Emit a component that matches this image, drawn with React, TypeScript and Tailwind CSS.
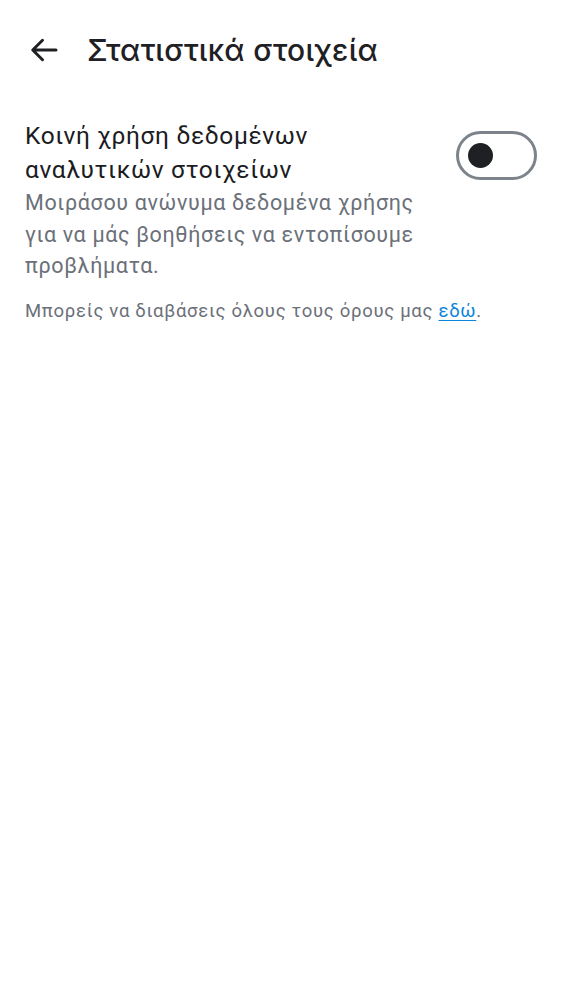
import React, { useState } from "react";

function BackArrow() {
  return (
    <svg width="36" height="36" viewBox="0 0 24 24" fill="none" className="text-[#1f2024]">
      <path
        d="M20 12H4.8M11 5.5L4.5 12L11 18.5"
        stroke="currentColor"
        strokeWidth="2"
        strokeLinecap="round"
        strokeLinejoin="round"
      />
    </svg>
  );
}

export default function App() {
  const [on, setOn] = useState(false);

  return (
    <div className="min-h-[1000px] w-full bg-white font-['Roboto',sans-serif]">
      <header className="flex items-center h-[100px] pl-[26px]">
        <button className="flex items-center justify-center">
          <BackArrow />
        </button>
        <h1 className="ml-[25px] font-['Inter',sans-serif] font-medium text-[30px] text-[#1f2024] tracking-[0.3px]">
          Στατιστικά στοιχεία
        </h1>
      </header>

      <section className="px-[25px] pt-[19px]">
        <div className="flex items-start justify-between">
          <div className="w-[400px]">
            <p className="text-[24.5px] leading-[34px] text-[#1b1c1f] tracking-[0.65px]">
              Κοινή χρήση δεδομένων αναλυτικών στοιχείων
            </p>
            <p className="text-[21.5px] leading-[31.5px] text-[#6b7079] tracking-[0.65px]">
              Μοιράσου ανώνυμα δεδομένα χρήσης για να μάς βοηθήσεις να εντοπίσουμε προβλήματα.
            </p>
          </div>
          <button
            onClick={() => setOn(!on)}
            className="mt-[12px] w-[81px] h-[49px] rounded-full border-[3px] border-[#7d838b] flex items-center px-[9px]"
          >
            <span className="w-[25px] h-[25px] rounded-full bg-[#1f2024]" />
          </button>
        </div>

        <p className="mt-[16px] text-[18.5px] text-[#6b7079] tracking-[0.7px]">
          Μπορείς να διαβάσεις όλους τους όρους μας{" "}
          <a href="#" className="text-[#0b84dc] underline underline-offset-[3px]">
            εδώ
          </a>
          .
        </p>
      </section>
    </div>
  );
}
